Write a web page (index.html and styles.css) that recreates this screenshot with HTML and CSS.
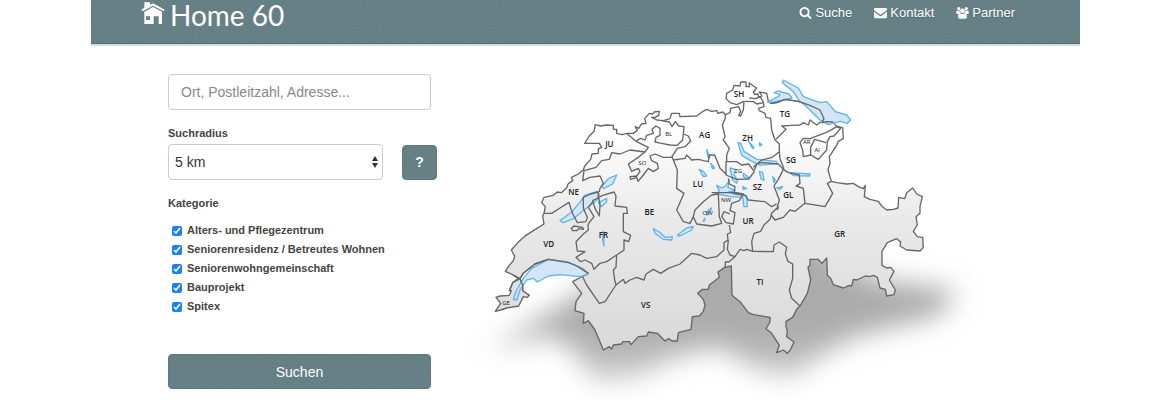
FILE: index.html
```html
<!DOCTYPE html>
<html lang="de">
<head>
<meta charset="utf-8">
<meta name="viewport" content="width=device-width, initial-scale=1">
<title>Home 60</title>
<link rel="stylesheet" href="styles.css">
</head>
<body>
<div class="page">
  <header class="header textured">
    <a class="logo" href="#">
      <svg class="logo-icon" viewBox="0 0 72 66" aria-hidden="true">
        <path fill="#fff" d="M10 1h17v7L36 4 71 23l-3 5L36 11 4 28 1 23 10 17z"/>
        <path fill="#fff" fill-rule="evenodd" d="M10 29 36 15l27 14v37H53V43H38v23H10zM15 43v11h12V43z"/>
      </svg>
      <span>Home 60</span>
    </a>
    <nav class="nav">
      <a href="#"><svg viewBox="0 128 1664 1664" aria-hidden="true"><path d="M1152 832q0-185-131.500-316.500t-316.500-131.500-316.500 131.500-131.500 316.500 131.500 316.500 316.500 131.500 316.500-131.500 131.500-316.500zm512 832q0 52-38 90t-90 38q-54 0-90-38l-343-342q-179 124-399 124-143 0-273.500-55.500t-225-150-150-225-55.500-273.500 55.500-273.500 150-225 225-150 273.500-55.500 273.500 55.500 225 150 150 225 55.500 273.500q0 220-124 399l343 343q37 37 37 90z"/></svg>Suche</a>
      <a href="#"><svg viewBox="0 0 39 36" aria-hidden="true"><path d="M3 3h33q3 0 3 3 0 4-4 7L22 22q-2.500 2-5 0L4 13Q0 10 0 6q0-3 3-3zM0 14l16 12q3.500 2.500 7 0l16-12v16q0 4-4 4H4q-4 0-4-4z"/></svg>Kontakt</a>
      <a href="#"><svg viewBox="0 0 40 38" aria-hidden="true"><circle cx="8" cy="5" r="5"/><circle cx="32" cy="5" r="5"/><circle cx="20" cy="12" r="7.500"/><path d="M4 11q4 2 7-1-1 6 3 9-4 0-6 3H4q-4 0-4-4 0-7 4-7zM36 11q-4 2-7-1 1 6-3 9 4 0 6 3h4q4 0 4-4 0-7-4-7zM13 20q7 5 14 0 7 0 7 12 0 5-5 5H11q-5 0-5-5 0-12 7-12z"/></svg>Partner</a>
    </nav>
  </header>

  <main class="content">
    <form class="search">
      <input class="field" type="text" placeholder="Ort, Postleitzahl, Adresse..." aria-label="Ort, Postleitzahl, Adresse">
      <label class="caption" for="radius">Suchradius</label>
      <div class="radius-row">
        <div class="select-box">
          <select class="field select" id="radius"><option>5 km</option><option>10 km</option><option>20 km</option></select>
          <svg class="arrows" viewBox="0 0 8 14" aria-hidden="true"><path d="M4 1 7 6H1zM4 13 1 8h6z"/></svg>
        </div>
        <button class="button help textured" type="button">?</button>
      </div>
      <fieldset class="categories">
        <legend class="caption">Kategorie</legend>
        <label><input type="checkbox" checked>Alters- und Pflegezentrum</label>
        <label><input type="checkbox" checked>Seniorenresidenz / Betreutes Wohnen</label>
        <label><input type="checkbox" checked>Seniorenwohngemeinschaft</label>
        <label><input type="checkbox" checked>Bauprojekt</label>
        <label><input type="checkbox" checked>Spitex</label>
      </fieldset>
      <button class="button submit textured" type="submit">Suchen</button>
    </form>

    <svg class="map" viewBox="0 0 1560 1020" role="img" aria-label="Karte der Schweizer Kantone">
      <defs>
        <linearGradient id="land" gradientUnits="userSpaceOnUse" x1="0" y1="220" x2="0" y2="880">
          <stop offset="0" stop-color="#fff"/><stop offset=".4" stop-color="#e9e9e9"/><stop offset="1" stop-color="#d8d8d8"/>
        </linearGradient>
        <linearGradient id="shade" gradientUnits="userSpaceOnUse" x1="0" y1="600" x2="0" y2="960">
          <stop offset="0" stop-color="#aaa"/><stop offset=".6" stop-color="#acacac"/><stop offset="1" stop-color="#ccc"/>
        </linearGradient>
        <filter id="soft" x="-20%" y="-40%" width="140%" height="180%"><feGaussianBlur stdDeviation="40"/></filter>
      </defs>
      <path class="shadow" filter="url(#soft)" d="M60 870 200 780 350 690 560 560 1000 500 1120 610 1230 660 1460 690 1410 765 1150 830 1050 890 960 950 840 920 750 860 620 890 500 950 370 960 310 870 240 825z"/>
      <path class="country" d="M76 754 92 730 78 712 90 708 118 706 124 692 118 692 128 668 145 655 132 646 106 634 118 616 130 602 134 588 124 570 146 545 168 526 190 512 222 492 218 468 222 460 226 440 215 428 222 412 250 406 262 396 274 398 290 383 294 372 308 362 304 352 325 342 340 330 344 318 362 298 366 282 385 280 385 266 395 262 388 250 344 250 358 228 372 214 376 194 392 198 408 195 430 196 430 208 440 208 440 220 455 224 472 220 490 220 502 212 496 200 506 205 514 192 528 190 524 176 538 160 548 162 552 156 568 154 566 166 556 172 545 172 560 180 580 182 600 176 605 160 628 160 630 170 680 168 696 156 710 148 725 154 740 152 744 160 758 156 766 164 780 158 782 145 795 142 806 140 812 154 806 166 812 168 820 150 822 124 800 134 780 128 768 115 770 100 788 90 792 76 810 78 812 66 828 66 828 80 838 80 838 68 850 78 860 84 850 96 854 104 864 102 866 112 876 108 868 96 890 100 894 120 902 130 920 128 945 118 985 124 1020 136 1050 150 1062 176 1056 188 1070 185 1090 186 1098 198 1118 203 1120 236 1105 244 1100 256 1078 290 1080 310 1074 330 1084 364 1100 368 1130 372 1150 370 1165 380 1180 386 1186 376 1183 410 1200 418 1225 424 1235 438 1250 450 1270 448 1284 444 1286 412 1304 416 1310 398 1328 384 1340 402 1357 410 1350 440 1350 460 1338 470 1342 495 1330 514 1342 530 1358 532 1360 562 1350 573 1310 570 1290 558 1292 546 1280 536 1252 548 1236 574 1236 616 1250 624 1262 622 1272 634 1258 660 1276 690 1272 704 1250 708 1246 688 1230 684 1222 652 1210 646 1200 650 1186 648 1160 660 1150 658 1145 678 1138 676 1120 684 1090 674 1082 655 1072 646 1070 594 1056 610 1044 598 1020 598 1020 616 1014 622 1022 660 1012 700 990 738 980 748 968 772 948 784 948 800 952 812 950 830 972 846 962 868 952 880 940 870 920 878 928 856 905 820 888 806 900 786 900 772 850 764 835 758 810 725 786 706 784 618 764 622 744 636 748 652 718 675 715 688 697 688 683 700 700 718 705 735 700 754 688 768 667 770 663 808 625 818 622 843 606 843 596 836 585 843 562 820 535 816 530 828 505 830 483 854 478 845 458 845 455 852 430 855 425 867 418 860 400 870 375 810 355 782 340 790 342 760 315 752 318 725 335 700 308 665 340 648 355 640 320 618 295 608 235 598 195 612 160 640 150 656 158 675 158 692 178 706 172 712 160 710 146 738 110 744 92 750z"/>
      <path class="lake" d="M130 718 140 690 160 655 185 625 235 598 295 606 340 626 355 642 330 650 270 644 235 648 202 666 190 655 170 660 150 690 140 720zM270 482 305 456 332 424 344 406 382 394 388 404 384 418 345 448 310 476 280 488zM385 428 410 416 410 426 394 440zM396 378 415 356 440 345 428 372 400 386zM940 60 985 84 1000 110 1050 128 1070 125 1096 155 1130 165 1142 180 1132 190 1110 184 1075 194 1050 180 1010 140 988 122 970 95 937 68zM912 98 925 93 957 102 966 114 940 120 898 128 892 126 924 110 930 104zM550 506 568 516 585 532 607 530 605 540 580 538 555 520zM622 526 650 504 670 500 665 510 630 528zM804 248 812 250 822 274 860 298 920 304 920 311 870 316 842 302 815 286zM836 244 852 262 848 266zM868 248 876 254 870 258zM688 328 700 334 710 348 700 350zM710 268 720 292 714 292zM722 310 734 324 728 326zM868 334 878 338 882 360 874 358zM908 350 916 360 912 368zM920 384 938 380 930 388zM960 338 1020 342 1018 348 970 347zM780 324 796 328 792 344 802 360 800 370 788 360zM820 340 836 352 832 356 820 350zM740 376 755 384 765 380 778 362 774 382 796 392 775 396 792 402 830 408 832 440 822 440 818 412 782 410 742 402 748 392zM818 380 830 386 820 388zM710 456 724 444 722 452 710 466zM700 484 704 474 704 482zM400 514 402 558 398 540z"/>
      <path class="border" d="M355 640 320 618 295 608 235 598 195 612 160 640 150 656 130 646M118 692 128 668 150 656 158 675 158 692M902 130 920 128 945 118 985 124 1020 136 1050 150 1062 176 1056 188 1070 185 1090 186M472 222 500 245 535 262 525 276 480 270 450 282 425 278 418 298 395 302 378 322 342 332M342 332 338 362 360 352 390 348 400 370 390 385 388 396M222 460 245 460 270 444 297 427 304 450 310 465 322 488 348 485 352 472 340 445 340 412 362 402 385 396 384 414 368 422 375 445 388 468 390 434 386 412 398 406 432 396 438 408 435 438 470 442 472 460 460 460 460 515 482 526 476 545 462 540 462 570 440 585 410 605 390 610 372 628 365 610 345 600 332 605 318 592 345 575 322 573 318 545 340 522 355 510 354 494 360 485 372 470 355 442 368 426M304 505 312 498 338 502 340 508 326 506 320 512 308 512zM440 585 438 622 430 630 434 660 438 675 405 725 388 730 350 675 338 650M438 675 460 658 465 670 480 660 500 652 522 660 528 642 550 628 572 640 595 625 630 612 665 580 690 585 710 595 740 590 762 570 762 548 774 540 772 522 782 518 778 495M775 540 772 568 780 585 795 590 776 606 766 606 766 622M795 590 810 568 822 572 830 568 848 574 910 575 912 555 928 546 950 562 946 582 954 604 968 612 968 655 958 690 965 715 990 738M848 574 845 545 852 520 872 514 882 495 900 478 905 460 925 440 922 450M903 465 915 480 940 472 960 450 975 454 1005 430 1000 385 978 378 990 370 988 345 955 338 940 328 925 358 912 378 928 420 922 440M1005 430 1065 440 1088 400 1072 370 1084 364M768 305 768 345 800 358 836 357 853 335 836 312 815 315 800 305zM853 330 862 310 880 308 925 312 940 328M775 355 778 372 795 380 792 400 825 405 835 420 885 425 905 440 920 432M670 470 675 450 700 425 725 405 745 402 748 470 755 490 725 498 680 492zM725 398 800 398 820 402 808 422 785 430 780 452 795 458 790 492 768 488 755 470 762 455 780 462M610 300 622 330 620 385 642 400 620 450 640 485 660 490 670 470M610 300 645 295 650 285 665 300 685 298 700 302 715 305 718 285 734 285 750 325 768 342M610 300 606 290 622 265 645 260 662 243 655 228 640 222 642 200 626 198 616 185 606 200 598 186 575 182M640 222 638 240 622 256 600 255 575 250 555 246 558 232 570 226 570 205 558 198 546 208 550 220 530 226 525 240 512 235 500 242M525 276 505 292 475 312 485 334 505 325 510 335 500 348 480 350 482 358 500 352 504 364 520 345 535 325 550 335 565 325 562 310 545 302 540 288 555 282 580 292 605 292M766 164 766 175 757 195 765 230 760 240 778 265 770 285 770 305M824 124 850 125 860 132 880 128 882 140 865 145 868 152 885 160 888 172 902 175 905 210 915 240 928 252 928 275 905 293 875 300 850 322M838 114 858 116 870 110 880 126M918 238 948 208 935 198 965 196 990 195 1000 188 1015 195 1020 180 1040 195 1052 185M928 275 930 296 942 326M990 248 1000 235 1020 236 1075 215 1100 200 1112 205 1092 228 1080 230 1072 245 1070 270 1045 298 1022 285 1000 290 998 270zM1022 285 1022 262 1034 238 1068 248"/>
      <g class="canton">
        <text x="418" y="260">JU</text><text x="704" y="235">AG</text><text x="833" y="243">ZH</text><text x="807" y="111">SH</text><text x="945" y="170">TG</text><text x="963" y="309">SG</text><text x="684" y="382">LU</text><text x="862" y="389">SZ</text><text x="955" y="413">GL</text><text x="311" y="406">NE</text><text x="538" y="466">BE</text><text x="834" y="493">UR</text><text x="400" y="535">FR</text><text x="1109" y="531">GR</text><text x="236" y="561">VD</text><text x="870" y="675">TI</text><text x="527" y="744">VS</text>
      </g>
      <g class="canton small">
        <text x="596" y="229">BL</text><text x="517" y="314">SO</text><text x="805" y="340">ZG</text><text x="768" y="427">NW</text><text x="713" y="466">OW</text><text x="1010" y="252">AR</text><text x="1042" y="275">AI</text><text x="108" y="734">GE</text>
      </g>
    </svg>
  </main>
</div>
</body>
</html>
```

FILE: styles.css
```css
* { box-sizing: border-box; }

body {
  margin: 0;
  background: #fff;
  color: #444;
  font-family: "Liberation Sans", Arial, sans-serif;
  font-size: 14px;
}

.page { max-width: 989px; margin: 0 auto; }

.textured {
  background-color: #647f84;
  background-image: repeating-linear-gradient(35deg, rgba(255, 255, 255, .03) 0 1px, transparent 1px 3px);
}

.header {
  display: flex;
  justify-content: space-between;
  align-items: flex-start;
  padding: 0 65px 13px 50px;
  border-bottom: 1px solid #526f75;
  box-shadow: 0 2px 0 #d2dedd;
}

.header a { color: #fff; text-decoration: none; }

.logo {
  display: flex;
  align-items: flex-start;
  gap: 5px;
  font-family: Lato, sans-serif;
  font-size: 28px;
  line-height: 30px;
}

.logo-icon { width: 24px; height: 22px; margin-top: 2px; }

.nav {
  display: flex;
  gap: 22px;
  font-size: 13px;
  line-height: 26px;
  text-shadow: 0 1px 1px #4c666b;
}

.nav a { display: flex; align-items: center; gap: 3px; }
.nav svg { width: 13px; height: 12px; fill: #fff; }

.content {
  display: flex;
  flex-wrap: wrap;
  align-items: flex-start;
  gap: 33px;
  padding: 16px 77px 0;
}

.search { flex: 0 0 269px; padding: 14px 0 0; }

.field {
  display: block;
  width: 263px;
  height: 36px;
  padding: 0 12px;
  border: 1px solid #ccc;
  border-radius: 4px;
  background: #fff;
  color: #333;
  font: inherit;
}

.field::placeholder { color: #888; opacity: 1; }

.caption {
  display: block;
  padding: 0;
  color: #444;
  font-size: 11px;
  font-weight: bold;
  line-height: 14px;
}

label.caption { margin: 16px 0 4px; }

.radius-row { display: flex; justify-content: space-between; align-items: center; }
.select-box { position: relative; width: 215px; }
.select { width: 100%; padding: 0 6px; appearance: none; }

.arrows {
  position: absolute;
  top: 11px;
  right: 4px;
  width: 8px;
  height: 14px;
  fill: #333;
  pointer-events: none;
}

.button {
  height: 35px;
  padding: 0;
  border: 1px solid #5b7b81;
  border-radius: 4px;
  color: #fff;
  font: inherit;
}

.help { width: 35px; font-weight: bold; }
.submit { display: block; width: 263px; }

.categories {
  display: grid;
  min-width: 0;
  margin: 16px 0 38px;
  padding: 0;
  border: 0;
}

.categories legend { margin-bottom: 11px; }

.categories label {
  display: flex;
  align-items: center;
  gap: 5px;
  padding-left: 4px;
  font-size: 11px;
  font-weight: bold;
  line-height: 19px;
}

.categories input {
  width: 10px;
  height: 10px;
  margin: 0;
  border-radius: 2px;
  accent-color: #1a82f7;
}

.map { display: block; flex: 1 1 400px; min-width: 0; max-width: 520px; }
.shadow { fill: url(#shade); }
.country { fill: url(#land); stroke: #666; stroke-width: 4; stroke-linejoin: round; }
.border { fill: none; stroke: #666; stroke-width: 4; stroke-linejoin: round; }
.lake { fill: #d4e6f5; stroke: #5fb4ea; stroke-width: 4; stroke-linejoin: round; }

.canton {
  fill: #222;
  font-family: "Open Sans", "Noto Sans", sans-serif;
  font-size: 24px;
  font-weight: 600;
  text-anchor: middle;
}

.canton.small { font-size: 18px; font-weight: 400; }
```
